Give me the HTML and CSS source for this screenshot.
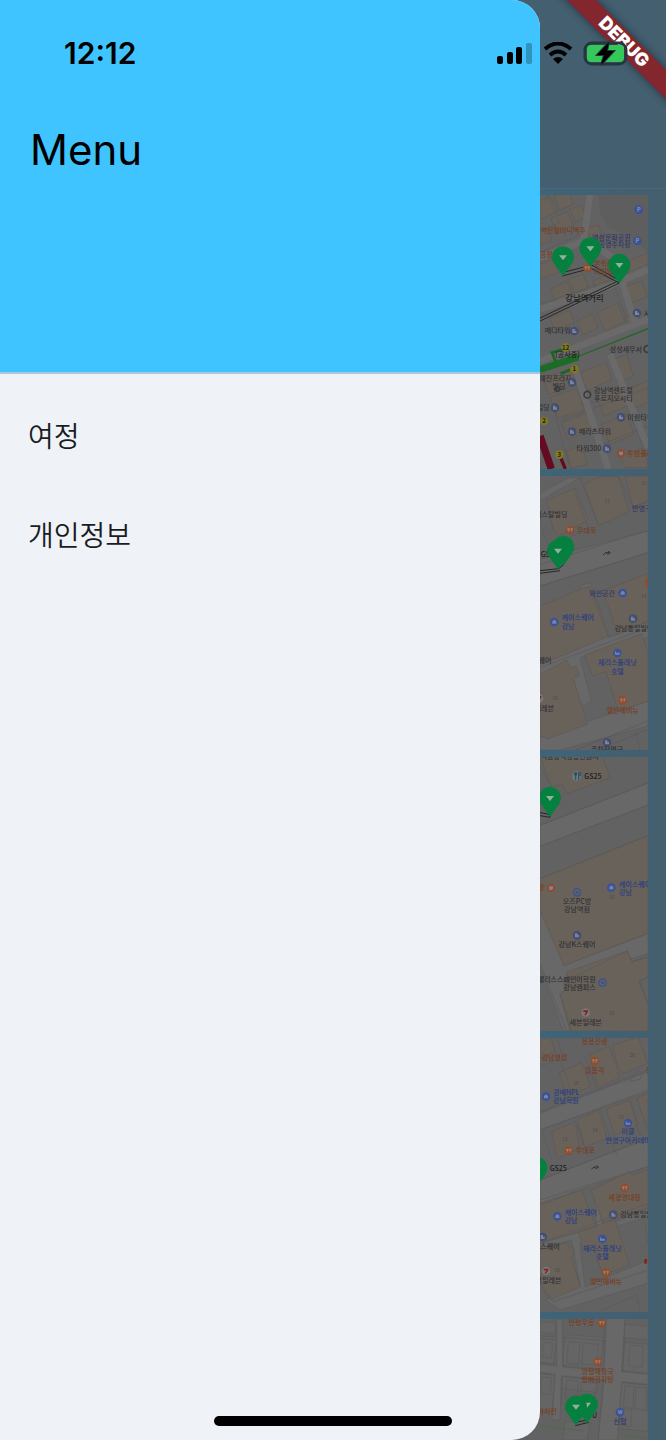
FILE: index.html
```html
<!DOCTYPE html>
<html lang="ko">
<head>
<meta charset="utf-8">
<meta name="viewport" content="width=device-width, initial-scale=1">
<title>Menu</title>
<link rel="stylesheet" href="styles.css">
</head>
<body>
<div class="app">
  <svg class="defs" width="0" height="0" aria-hidden="true">
    <defs>
      <symbol id="pin" viewBox="-40 -94 80 100" overflow="visible">
        <path class="pin-body" d="M0 0L-28-39A33 33 0 1 1 28-39Z"/>
        <path class="pin-mark" d="M-12-62H12L0-47Z"/>
      </symbol>
      <g id="poi-building"><circle class="slate" r="13"/><path class="glyph" d="M-6 6V-6H1V-1H6V6Z"/></g>
      <g id="poi-blue"><circle class="blue" r="13"/><path class="glyph" d="M-6 5V-2L0-7L6-2V5Z"/></g>
      <g id="poi-bed"><circle class="blue" r="13"/><path class="glyph" d="M-7 5V-5H-4V-1H7V5Z"/></g>
      <g id="poi-food"><circle class="orange" r="13"/><path class="glyph-line" d="M-4-6V6M4-6V6M-7-5V-1H-1V-5M4-5H7V0H4"/></g>
      <g id="poi-cup"><circle class="orange" r="13"/><path class="glyph" d="M-6-5H6V2L3 6H-3L-6 2Z"/></g>
      <g id="poi-ring"><circle class="ring" r="11"/><circle class="blue" r="5"/></g>
      <g id="poi-seven"><circle class="disc" r="13"/><path class="seven" d="M-7-7H7V-3L0 8H-4L1-2H-7Z"/></g>
      <g id="turn"><path class="arrow" d="M-11 5L-3-2H9M4-6L11-2L4 3M-3-2L3 3"/></g>
    </defs>
  </svg>

  <main class="trips">
    <svg class="map" viewBox="30 42 324 822" preserveAspectRatio="xMaxYMin meet" role="img" aria-label="강남역 지도">
      <path class="park" d="M205 40H354V215L300 165L235 140L210 95Z"/>
      <path class="building" d="M30 60L62 48L82 92L30 116ZM72 42L120 40L130 70L88 88ZM62 112L112 92L130 134L80 152ZM120 86L158 72L164 110L136 122ZM30 150L50 142L66 178L30 192ZM30 250L72 234L84 275L30 295ZM170 140L205 132L218 168L180 176ZM60 325L110 300L128 342L78 365ZM115 295L160 280L176 320L136 338ZM188 300L235 280L252 315L204 334ZM285 245L354 215V275L305 292ZM280 320L335 300L352 348L298 366ZM200 395L262 366L286 420L226 450ZM140 420L188 398L204 440L160 462ZM60 412L120 388L134 424L76 448ZM280 410L320 392L338 430L300 445Z"/>
      <path class="building" d="M150 575L230 545L245 595L172 628ZM246 538L290 520L310 585L262 604ZM40 590L120 565L142 610L55 640ZM60 650L140 622L164 686L84 712ZM95 725L170 695L190 745L112 775ZM200 640L275 610L298 672L222 705ZM290 625L354 600V665L315 680ZM215 730L290 700L312 760L240 790ZM110 810L155 792L172 850L125 862ZM270 825L345 800L354 860H285Z"/>
      <path class="edge" d="M30 215L165 155M50 40L90 125L30 152M168 200L190 250M30 370L230 300L354 250M230 255L298 435M130 565L230 864M240 525L354 840M150 670L200 660M90 720L354 620M190 800L354 735M70 680L120 864"/>
      <path class="road" d="M30 230L160 180L180 42M166 175L255 235L320 440M30 385L240 315L354 265M30 540L354 415M134 560L235 864M240 520L354 800"/>
      <path class="subway-thin" d="M140 528L354 443"/>
      <path class="subway" d="M30 566L145 528M80 550L66 515L115 500M92 578L130 562"/>
      <path class="subway-wide" d="M30 566L145 528"/>
      <path class="metro-red" d="M30 765L64 864"/>
      <path class="metro-red-thin" d="M92 830L106 864"/>
      <path class="route" d="M97 285L183 262L268 306L30 420M97 275L185 252L268 298L30 411"/>
      <circle class="blue" cx="326" cy="86" r="13"/><text class="icon-letter" x="326" y="93">P</text>
      <circle class="blue" cx="322" cy="180" r="13"/><text class="icon-letter" x="322" y="187">P</text>
      <text class="label brown" x="32" y="157">역전할머니맥주</text>
      <text class="label navy end" x="302" y="176">역삼문화공원</text>
      <text class="label navy end" x="302" y="199">공영주차장</text>
      <text class="label brown" x="30" y="228">곰장</text>
      <use href="#poi-food" x="172" y="261"/>
      <text class="label brown" x="192" y="255">본죽&amp;</text>
      <text class="label brown" x="192" y="279">비빔밥</text>
      <use href="#pin" x="59" y="191" width="80" height="100"/>
      <use href="#pin" x="141" y="164" width="80" height="100"/>
      <use href="#pin" x="228" y="214" width="80" height="100"/>
      <text class="label-large" x="106" y="361">강남역거리</text>
      <use href="#poi-building" x="321" y="396"/><text class="label" x="342" y="404">사</text>
      <text class="label" x="44" y="457">메디타워</text><use href="#poi-building" x="133" y="450"/>
      <text class="label end" x="336" y="512">삼성세무서</text><circle class="ring-grey" cx="352" cy="504" r="10"/>
      <circle class="yellow" cx="107" cy="499" r="13"/><text class="exit" x="107" y="506">12</text>
      <text class="label dark" x="76" y="529">(공사중)</text>
      <circle class="yellow" cx="133" cy="564" r="13"/><text class="exit" x="133" y="571">1</text>
      <text class="label" x="28" y="599">해진프라자</text><text class="label end" x="106" y="623">빌딩</text>
      <use href="#poi-building" x="126" y="604"/><circle class="ring-grey" cx="82" cy="624" r="7"/>
      <circle class="ring-grey" cx="172" cy="641" r="10"/>
      <text class="label" x="192" y="637">강남역센트럴</text><text class="label" x="192" y="661">푸르지오시티</text>
      <text class="label" x="20" y="688">빌딩</text><use href="#poi-building" x="75" y="680"/>
      <circle class="yellow" cx="42" cy="720" r="12"/><text class="exit" x="42" y="727">2</text>
      <use href="#poi-building" x="273" y="709"/><text class="label" x="292" y="717">미림타워</text>
      <use href="#poi-building" x="126" y="752"/><text class="label" x="146" y="760">메리츠타워</text>
      <text class="label end" x="214" y="811">타워300</text><use href="#poi-building" x="231" y="803"/>
      <circle class="yellow" cx="88" cy="821" r="13"/><text class="exit" x="88" y="828">3</text>
      <use href="#poi-cup" x="273" y="817"/><text class="label brown" x="292" y="825">투썸플레이스</text>
    </svg>

    <svg class="map" viewBox="30 15 324 822" preserveAspectRatio="xMaxYMin meet" role="img" aria-label="우대포 주변 지도">
      <path class="road-area" d="M30 62L110 20H150L30 90ZM30 265L354 180V245L30 345ZM30 560L140 525L178 445L150 345L180 335L235 500L354 455V500L240 530L150 560L185 690L40 765L30 780ZM30 800L354 690V765L90 837H30Z"/>
      <path class="building" d="M50 88L135 52L175 148L90 192L70 180ZM160 42L210 17H265L298 122L205 164ZM285 15H354V88L310 108ZM30 405L175 345L205 400L235 495L120 545L30 580ZM215 360L354 308V450L262 490L240 420ZM164 552L335 488L354 550V690L265 720L228 602L188 615ZM30 610L110 568L122 590L138 585L148 612L130 622L172 760L52 804L30 790Z"/>
      <path class="edge" d="M30 68L120 18M150 16L208 165M265 15L310 110L354 92M30 160L65 245M135 70L175 170L90 215M30 280L354 178M30 345L354 245M175 345L235 495M30 590L354 470M138 836L354 750M200 837L320 790L330 837M315 790L354 775"/>
      <text class="tiny" x="231" y="97">11</text><text class="tiny" x="341" y="42">15</text><text class="tiny" x="341" y="380">14</text><text class="tiny" x="74" y="688">18</text>
      <text class="label end" x="112" y="138">크리스탈빌딩</text>
      <text class="label navy" x="306" y="119">반영구</text>
      <use href="#poi-food" x="120" y="177"/><text class="label brown" x="141" y="186">우대포</text>
      <text class="label dark" x="32" y="257">GS25</text>
      <path class="route" d="M30 299L86 293L104 278M30 307L90 299"/>
      <use href="#pin" x="60" y="190" width="80" height="100"/><use href="#pin" x="44" y="201" width="80" height="100"/>
      <use href="#turn" x="230" y="247"/>
      <circle class="orange" cx="356" cy="334" r="12"/>
      <text class="label navy end" x="255" y="375">와인공간</text><use href="#poi-blue" x="278" y="366"/>
      <use href="#poi-blue" x="73" y="453"/><text class="label blue-text" x="95" y="448">케이스퀘어</text><text class="label blue-text" x="95" y="474">강남</text>
      <use href="#poi-building" x="309" y="443"/><text class="label" x="254" y="480">강남통일빌딩</text>
      <text class="label end" x="64" y="575">K스퀘어</text>
      <use href="#poi-bed" x="262" y="546"/><text class="label blue-text mid" x="262" y="583">체리스플래닛</text><text class="label blue-text mid" x="262" y="608">호텔</text>
      <use href="#poi-seven" x="27" y="682"/><text class="label end" x="72" y="720">세븐일레븐</text>
      <use href="#poi-food" x="278" y="688"/><text class="label brown mid" x="278" y="725">엘빈에비뉴</text>
      <use href="#poi-building" x="231" y="814"/><text class="label mid" x="231" y="844">주차장연구</text>
    </svg>

    <svg class="map" viewBox="30 20 324 822" preserveAspectRatio="xMaxYMin meet" role="img" aria-label="오즈PC방 주변 지도">
      <path class="road-area" d="M30 225L354 98V166L30 288ZM30 470L102 645L354 550V610L100 690L130 842H100L30 650Z"/>
      <path class="building" d="M30 18H215L242 82L112 130L98 102L65 110ZM30 385L354 256V548L102 646L30 480ZM110 665L292 602L306 634L354 620V680L328 692L354 760V842H120L90 730L108 715Z"/>
      <path class="edge" d="M30 225L354 98M30 288L354 163M30 385L354 256M30 48L65 110M100 695L292 602L306 634L354 620M90 730L125 842M354 680L328 692L354 760M30 640L110 842"/>
      <text class="label" x="32" y="26">역삼공식공용민원지</text>
      <rect class="disc" x="127" y="63" width="26" height="28" rx="12"/>
      <path class="fork" d="M134 66V74H140V66M137 66V89M146 66V89M146 67H151V76H146"/>
      <text class="label dark" x="163" y="86">GS25</text>
      <path class="route" d="M30 187L62 193M30 196L60 201V190"/>
      <use href="#pin" x="20" y="105" width="80" height="100"/>
      <text class="label brown end" x="43" y="420">노랑</text><use href="#poi-cup" x="63" y="413"/>
      <use href="#poi-ring" x="141" y="426"/><text class="label mid" x="141" y="462">오즈PC방</text><text class="label mid" x="141" y="486">강남역점</text>
      <use href="#poi-blue" x="244" y="412"/><text class="label blue-text" x="267" y="409">케이스퀘어</text><text class="label blue-text" x="267" y="434">강남</text>
      <text class="tiny" x="245" y="446">10</text><text class="tiny" x="245" y="794">10</text>
      <use href="#poi-building" x="141" y="555"/><text class="label mid" x="141" y="591">강남K스퀘어</text>
      <text class="label end" x="197" y="694">펠리스스페인어학원</text><text class="label end" x="197" y="718">강남캠퍼스</text><use href="#poi-ring" x="218" y="697"/>
      <use href="#poi-seven" x="167" y="787"/><text class="label mid" x="167" y="825">세븐일레븐</text>
    </svg>

    <svg class="map" viewBox="30 24 324 822" preserveAspectRatio="xMaxYMin meet" role="img" aria-label="강남 골목 지도">
      <path class="road-area" d="M30 250L354 125V185L30 300ZM30 450L354 325V410L30 520ZM190 480L220 590L354 535V560L210 605L150 640L165 770L354 690V760L90 840L45 810L150 765L125 630L30 655V640L200 590Z"/>
      <path class="building" d="M30 32L62 22L75 65L30 85ZM88 128L155 98L182 168L112 202ZM178 75L238 48L270 142L205 172ZM248 45L325 21L352 100L280 130L262 105ZM65 305L125 280L138 290L148 355L82 386ZM142 270L205 240L230 325L165 352ZM228 238L300 210L325 285L255 315ZM320 205L354 190V300ZM30 525L155 480L198 590L30 640ZM182 480L300 425L305 435L354 420V535L220 578ZM145 605L255 568L298 705L218 735L190 650L160 660ZM30 660L110 638L118 655L130 650L132 672L122 680L152 770L65 808L30 760Z"/>
      <path class="edge" d="M30 110L90 85L130 205M165 80L200 175M80 22L100 85M30 245L354 120M30 300L354 180M35 300L65 390M135 270L168 365M210 240L260 375M300 210L330 320M30 450L354 325M30 510L354 410M30 640L354 520M30 750L50 800L70 815L354 720M210 843L320 795L330 843M345 580L354 640M300 155L320 120L338 130L330 148Z"/>
      <text class="tiny" x="138" y="166">10</text><text class="tiny" x="307" y="81">20</text><text class="tiny" x="104" y="334">13</text><text class="tiny" x="195" y="306">14</text><text class="tiny" x="273" y="267">15</text><text class="tiny" x="82" y="727">18</text>
      <text class="label brown mid" x="194" y="41">용용선생</text>
      <text class="label brown" x="35" y="90">강남맹겹</text>
      <use href="#poi-food" x="194" y="93"/><text class="label brown mid" x="194" y="128">일품각</text>
      <text class="label brown" x="348" y="128">봉</text>
      <use href="#poi-blue" x="48" y="200"/><text class="label blue-text" x="69" y="196">경매NPL</text><text class="label blue-text" x="69" y="220">강남학원</text>
      <use href="#poi-bed" x="294" y="279"/><text class="label blue-text mid" x="294" y="313">미클</text><text class="label blue-text mid" x="294" y="338">반영구아카데미</text>
      <use href="#poi-food" x="116" y="362"/><text class="label brown" x="137" y="370">우대포</text>
      <text class="label dark" x="59" y="422">GS25</text><use href="#turn" x="195" y="413"/>
      <use href="#pin" x="-20" y="376" width="80" height="100"/>
      <use href="#poi-food" x="284" y="474"/><text class="label brown mid" x="284" y="510">세광양대창</text>
      <use href="#poi-blue" x="82" y="559"/><text class="label blue-text" x="104" y="556">케이스퀘어</text><text class="label blue-text" x="104" y="580">강남</text>
      <use href="#poi-building" x="250" y="554"/><text class="label" x="271" y="562">강남통일빌딩</text>
      <use href="#poi-building" x="38" y="621"/><text class="label end" x="89" y="656">강남K스퀘어</text>
      <use href="#poi-bed" x="217" y="627"/><text class="label blue-text mid" x="217" y="662">체리스플래닛</text><text class="label blue-text mid" x="217" y="687">호텔</text>
      <use href="#poi-seven" x="48" y="723"/><text class="label end" x="94" y="760">세븐일레븐</text>
      <use href="#poi-food" x="228" y="728"/><text class="label brown mid" x="228" y="763">엘빈에비뉴</text>
      <path class="seven" d="M343 687H351V701H343Z"/>
    </svg>

    <svg class="map" viewBox="30 42 324 822" preserveAspectRatio="xMaxYMin meet" role="img" aria-label="신협 주변 지도">
      <path class="lot" d="M30 50L78 52L76 88L30 82ZM105 88L220 98L210 196L98 184ZM30 102L78 106L70 178L30 172ZM30 205L75 210L65 320L30 316ZM98 215L205 225L200 262L94 250ZM285 58L354 64V105L282 98ZM285 112L354 118V205L278 196ZM275 232L354 240V380L265 370ZM105 350L180 355L172 405H98Z"/>
      <path class="edge" d="M30 92L285 112M30 172L354 208M30 205L354 240M80 39L82 190L70 340M98 39L94 300M222 39V190L205 400M285 39L278 180L258 400M115 110L150 112L146 178L110 174ZM160 114L205 118L200 180L155 178ZM40 112L68 114L64 160L36 156ZM300 120L340 124L336 188L295 182ZM285 242L312 245L308 310L280 305ZM318 246L350 248V318L314 310ZM275 310L306 315L302 365L268 360ZM35 215L65 218L60 270L32 266ZM110 225L145 228L142 285L105 282ZM155 230L200 234L195 280L150 276Z"/>
      <path class="road-area" d="M30 178L80 184V42H98V186L222 196L230 39H285L275 200L354 208V238L275 230L262 405H205L222 224L94 212L90 345H66L76 208L30 202Z"/>
      <path class="greenline" d="M30 362L165 378M280 392L354 400"/>
      <text class="label brown end" x="193" y="61">안평우동</text><use href="#poi-food" x="215" y="54"/>
      <use href="#poi-food" x="203" y="171"/><text class="label brown mid" x="203" y="206">양평해장국</text><text class="label brown mid" x="203" y="230">왕뼈감자탕</text>
      <text class="label brown end" x="81" y="327">바치킨</text>
      <path class="route" d="M134 352L174 345M136 362L176 352"/>
      <text class="label dark" x="186" y="340">U</text>
      <use href="#pin" x="131" y="261" width="80" height="100"/><use href="#pin" x="98" y="267" width="80" height="100"/>
      <circle class="blue" cx="270" cy="322" r="13"/><text class="icon-letter" x="270" y="328">w</text><text class="label navy mid" x="270" y="358">신협</text>
    </svg>
  </main>

  <aside class="drawer">
    <header class="drawer-header"><h1 class="drawer-title">Menu</h1></header>
    <nav class="drawer-nav">
      <a class="drawer-link" href="#trips">여정</a>
      <a class="drawer-link" href="#profile">개인정보</a>
    </nav>
  </aside>

  <svg class="debug" viewBox="0 0 110 110" aria-label="DEBUG">
    <path class="ribbon-band" d="M1-10H30L120 80V109Z"/>
    <text class="ribbon-text" transform="translate(68 42) rotate(45)" y="6">DEBUG</text>
  </svg>

  <div class="status">
    <span class="time">12:12</span>
    <div class="indicators">
      <svg class="signal" viewBox="0 0 36 22"><rect x="1" y="14" width="6" height="8" rx="2"/><rect x="11" y="10" width="6" height="12" rx="2"/><rect x="20" y="5" width="6" height="17" rx="2"/><rect class="faint" x="30" y="1" width="6" height="21" rx="2"/></svg>
      <svg class="wifi" viewBox="0 0 30 22"><path d="M2 7Q15-4 28 7M7 13Q15 6 23 13"/><path class="dot" d="M10 17Q15 13 20 17L15 22Z"/></svg>
      <svg class="battery" viewBox="0 0 48 28"><rect class="shell" x="2" y="4" width="41" height="21" rx="7"/><rect class="charge" x="4" y="6" width="37" height="17" rx="4"/><path class="bolt" d="M26 3L14 16H21L18 26L31 12H24Z"/></svg>
    </div>
  </div>
  <div class="home-bar"></div>
</div>
</body>
</html>
```
FILE: styles.css
```css
* { box-sizing: border-box; }
body { margin: 0; font-family: Inter, "Noto Sans CJK KR", sans-serif; }
.app {
  position: relative;
  height: 100vh;
  overflow: hidden;
  background: linear-gradient(90deg, #3e6478 82%, #435f70 98%);
}
.defs { position: absolute; }
.trips { display: flex; flex-direction: column; gap: 7px; padding: 0 18px; }
.trips::before {
  content: "";
  height: 188px;
  margin: 0 -18px -1px;
  background: #435f70;
  border-bottom: 1px solid #4c6577;
}
.map { display: block; flex: none; width: 100%; height: 274px; background: #626262; font-family: "Noto Sans CJK KR", sans-serif; }

.building { fill: #69625b; stroke: #5d5752; stroke-width: 2; }
.lot { fill: #656565; stroke: #5b5b5b; stroke-width: 2; }
.park { fill: #5d5e5d; }
.edge { fill: none; stroke: #595959; stroke-width: 2; }
.road { fill: none; stroke: #6a6a6a; stroke-width: 20; }
.road-area { fill: #686868; stroke: #5b5b5b; stroke-width: 2; }
.route { fill: none; stroke: #262626; stroke-width: 3; }
.greenline { fill: none; stroke: #526a4a; stroke-width: 3; }
.subway { fill: none; stroke: #1a6425; stroke-width: 8; }
.subway-wide { fill: none; stroke: #1a6c26; stroke-width: 20; }
.subway-thin { fill: none; stroke: #22652b; stroke-width: 4; }
.metro-red { fill: none; stroke: #650b20; stroke-width: 22; }
.metro-red-thin { fill: none; stroke: #650b20; stroke-width: 10; }
.pin-body { fill: #06803e; }
.pin-mark { fill: #8fb29b; }
.slate { fill: #444e6f; }
.blue { fill: #3a529a; }
.orange { fill: #8f4d2d; }
.yellow { fill: #81791f; }
.disc { fill: #777; }
.seven { fill: #8a1f18; }
.glyph { fill: #7c83a0; }
.glyph-line { fill: none; stroke: #a58d80; stroke-width: 2; }
.ring { fill: none; stroke: #3a5290; stroke-width: 4; }
.ring-grey { fill: none; stroke: #3c3c40; stroke-width: 5; }
.arrow { fill: none; stroke: #343434; stroke-width: 3; }
.fork { fill: none; stroke: #17516c; stroke-width: 3; }
.label { font-size: 21px; font-weight: 500; fill: #303034; }
.label-large { font-size: 25px; font-weight: 500; fill: #222; }
.brown { fill: #7a3c1a; }
.navy { fill: #2e3868; }
.blue-text { fill: #263d84; }
.dark { fill: #202020; }
.end { text-anchor: end; }
.mid { text-anchor: middle; }
.tiny { font-size: 15px; fill: #4d4a48; text-anchor: middle; }
.icon-letter { font-size: 18px; font-weight: 700; fill: #858ba5; text-anchor: middle; }
.exit { font-size: 18px; font-weight: 700; fill: #222; text-anchor: middle; }

.drawer {
  position: absolute;
  inset: 0 auto 0 0;
  width: 540px;
  max-width: 90%;
  overflow: hidden;
  border-radius: 0 28px 28px 0;
  background: #eff3f8;
}
.drawer-header { height: 374px; padding: 124px 30px 0; background: #40c4ff; border-bottom: 2px solid #a6c8dc; }
.drawer-title { margin: 0; font-size: 42px; line-height: 52px; font-weight: 400; color: #000; }
.drawer-nav { display: flex; flex-direction: column; padding-top: 12px; }
.drawer-link {
  padding: 28px;
  font-size: 28px;
  line-height: 43px;
  font-weight: 350;
  color: #1a1c1f;
  text-decoration: none;
  font-family: "Noto Sans CJK KR", sans-serif;
}

.debug { position: absolute; top: 0; right: 0; width: 110px; height: 110px; overflow: hidden; }
.ribbon-band { fill: #83262e; filter: drop-shadow(0 0 4px rgb(0 0 0 / 45%)); }
.ribbon-text { font-size: 18px; font-weight: 900; fill: #fff; text-anchor: middle; }

.status {
  position: absolute;
  inset: 0 0 auto;
  display: flex;
  align-items: center;
  justify-content: space-between;
  height: 106px;
  padding: 0 35px 0 64px;
}
.time { font-size: 30px; font-weight: 600; }
.indicators { display: flex; align-items: center; }
.signal { width: 36px; height: 22px; margin-right: 11px; }
.faint { opacity: 0.25; }
.wifi { width: 30px; height: 22px; margin-right: 10px; fill: none; stroke: #000; stroke-width: 4; }
.dot { fill: #000; stroke: none; }
.battery { width: 48px; height: 28px; }
.shell { fill: none; stroke: #263640; stroke-width: 3; }
.charge { fill: #34c759; }
.bolt { fill: #000; stroke: #263b36; stroke-width: 2; paint-order: stroke; }

.home-bar {
  position: absolute;
  bottom: 14px;
  left: 50%;
  width: 238px;
  height: 10px;
  border-radius: 5px;
  background: #000;
  transform: translateX(-50%);
}
```
